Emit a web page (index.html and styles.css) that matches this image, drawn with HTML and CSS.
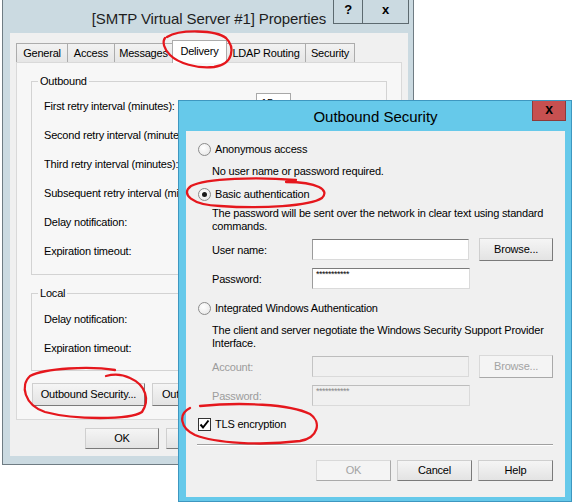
FILE: index.html
```html
<!DOCTYPE html>
<html lang="en">
<head>
    <meta charset="UTF-8">
    <title>SMTP Virtual Server Properties</title>
    <link rel="stylesheet" href="styles.css">
</head>
<body>
<div class="desk">

    <!-- back window: server properties -->
    <div class="win props">
        <div class="titlebar">[SMTP Virtual Server #1] Properties</div>
        <div class="caps">
            <span class="cap cap-help">?</span>
            <span class="cap cap-close">x</span>
        </div>
        <div class="client">
            <div class="tabs">
                <span class="tab t-general">General</span>
                <span class="tab t-access">Access</span>
                <span class="tab t-messages">Messages</span>
                <span class="tab t-delivery selected">Delivery</span>
                <span class="tab t-ldap">LDAP Routing</span>
                <span class="tab t-security">Security</span>
            </div>
            <div class="panel">
                <div class="group outbound">
                    <span class="group-title">Outbound</span>
                    <div class="row"><span class="row-label">First retry interval (minutes):</span><span class="spin">15</span></div>
                    <div class="row"><span class="row-label">Second retry interval (minutes):</span><span class="spin"></span></div>
                    <div class="row"><span class="row-label">Third retry interval (minutes):</span><span class="spin"></span></div>
                    <div class="row"><span class="row-label">Subsequent retry interval (minutes):</span><span class="spin"></span></div>
                    <div class="row"><span class="row-label">Delay notification:</span><span class="spin"></span></div>
                    <div class="row"><span class="row-label">Expiration timeout:</span><span class="spin"></span></div>
                </div>
                <div class="group local">
                    <span class="group-title">Local</span>
                    <div class="row"><span class="row-label">Delay notification:</span><span class="spin"></span></div>
                    <div class="row"><span class="row-label">Expiration timeout:</span><span class="spin"></span></div>
                </div>
                <div class="panel-btns">
                    <span class="btn wide">Outbound Security...</span>
                    <span class="btn wide left">Outbound</span>
                </div>
            </div>
            <div class="footer">
                <span class="btn">OK</span>
                <span class="btn">Cancel</span>
                <span class="btn">Apply</span>
                <span class="btn">Help</span>
            </div>
        </div>
    </div>

    <!-- front window: outbound security -->
    <div class="win sec">
        <div class="titlebar">Outbound Security</div>
        <span class="close-red">x</span>
        <div class="client sec-body">
            <div class="opt"><span class="radio"></span>Anonymous access</div>
            <div class="desc desc-first">No user name or password required.</div>

            <div class="opt opt-gap"><span class="radio on"></span>Basic authentication</div>
            <div class="desc">The password will be sent over the network in clear text using standard<br>commands.</div>
            <div class="field"><span class="field-label">User name:</span><span class="edit"></span><span class="btn browse">Browse...</span></div>
            <div class="field field-next"><span class="field-label">Password:</span><span class="edit"><span class="stars">***********</span></span></div>

            <div class="opt opt-gap-lg"><span class="radio"></span>Integrated Windows Authentication</div>
            <div class="desc desc-first">The client and server negotiate the Windows Security Support Provider<br>Interface.</div>
            <div class="field disabled"><span class="field-label">Account:</span><span class="edit"></span><span class="btn browse">Browse...</span></div>
            <div class="field field-next disabled"><span class="field-label">Password:</span><span class="edit"><span class="stars">***********</span></span></div>

            <div class="opt opt-tls"><span class="check"><svg width="11" height="11" viewBox="0 0 11 11"><path d="M1.5 5.5 L4 8.5 L9.5 1.5" fill="none" stroke="#000" stroke-width="2"/></svg></span>TLS encryption</div>

            <div class="sep"></div>
            <div class="sec-btns">
                <span class="btn off">OK</span>
                <span class="btn">Cancel</span>
                <span class="btn">Help</span>
            </div>
        </div>
    </div>

    <!-- red pen marks on top of the screenshot -->
    <svg class="marks" width="572" height="502" viewBox="0 0 572 502">
        <path d="M167 37 C180 29 216 30 226 38 C235 47 234 64 214 67 C197 69 178 63 170 55 C164 49 162 42 165 38"/>
        <path d="M296 180 C258 177 206 178 191 186 C180 194 192 205 220 206 C262 209 310 206 322 198 C330 190 318 182 286 182"/>
        <path d="M115 370 C90 366 45 368 30 376 C20 385 24 405 45 412 C75 420 130 420 142 412 C150 400 146 385 130 378 C122 374 113 374 106 376"/>
        <path d="M200 406 C240 402 290 404 310 414 C322 422 318 438 300 441 C260 446 215 443 195 435 C180 428 178 414 190 408"/>
    </svg>
</div>
</body>
</html>
```

FILE: styles.css
```css
body {
    margin: 0;
    font-family: "Liberation Sans", Arial, sans-serif;
    font-size: 11px;
    letter-spacing: -0.2px;
    color: #000;
    background: #fff;
}
.desk {
    position: relative;
    width: 572px;
    height: 502px;
    overflow: hidden;
}

/* windows */
.win {
    position: absolute;
    box-sizing: border-box;
    display: flex;
    flex-direction: column;
}
.titlebar {
    flex: none;
    text-align: center;
    font-size: 15px;
    letter-spacing: 0;
    white-space: nowrap;
}
.client {
    flex: 1;
    background: #f0f0f0;
    display: flex;
    flex-direction: column;
    box-sizing: border-box;
}

/* back window */
.props {
    left: 2px;
    top: -1px;
    width: 412px;
    height: 466px;
    background: #cbdae1;
    border: 1px solid #6f7c83;
    padding: 0 5px 8px 7px;
}
.props .titlebar {
    height: 33px;
    line-height: 37px;
    letter-spacing: -0.1px;
    color: #1e1e1e;
}
.caps {
    position: absolute;
    top: 0;
    right: 4px;
    display: flex;
}
.cap {
    box-sizing: border-box;
    height: 24px;
    border: 1px solid #5d6a70;
    border-top: none;
    font-weight: bold;
    font-size: 13px;
    text-align: center;
    line-height: 20px;
}
.cap-help { width: 30px; }
.cap-close { width: 47px; margin-left: -1px; }
.props .client {
    padding: 7px 6px 0 6px;
}

.tabs {
    display: flex;
    align-items: flex-end;
    height: 22px;
    position: relative;
    z-index: 1;
}
.tab {
    box-sizing: border-box;
    height: 19px;
    line-height: 18px;
    text-align: center;
    border: 1px solid #acacac;
    border-bottom: none;
    background: linear-gradient(#f2f2f2, #e6e6e6);
    margin-left: -1px;
    white-space: nowrap;
}
.t-general { width: 52px; margin-left: 0; }
.t-access { width: 48px; }
.t-messages { width: 59px; }
.t-delivery { width: 55px; }
.t-ldap { width: 80px; }
.t-security { width: 50px; }
.tab.selected {
    height: 23px;
    margin-bottom: -1px;
    background: #fff;
    line-height: 20px;
}

.panel {
    flex: none;
    box-sizing: border-box;
    height: 358px;
    border: 1px solid #d9d9d9;
    background: #f7f7f7;
    padding: 18px 14px 0 14px;
}
.group {
    position: relative;
    border: 1px solid #d3d3d3;
    padding: 10px 0 8px 12px;
}
.group-title {
    position: absolute;
    top: -8px;
    left: 6px;
    padding: 0 2px;
    background: #f7f7f7;
    line-height: 15px;
}
.local {
    margin-top: 18px;
    padding: 11px 0 7px 12px;
}
.row {
    height: 29px;
    display: flex;
    align-items: flex-start;
}
.row-label {
    width: 212px;
    line-height: 29px;
    white-space: nowrap;
    overflow: hidden;
}
.spin {
    box-sizing: border-box;
    width: 35px;
    height: 21px;
    margin-top: 1px;
    border: 1px solid #a8a8a8;
    background: #fff;
    padding-left: 4px;
    line-height: 19px;
}
.panel-btns {
    display: flex;
    gap: 7px;
    margin: 12px 0 0 1px;
}

/* buttons */
.btn {
    box-sizing: border-box;
    display: inline-block;
    width: 74px;
    height: 21px;
    line-height: 19px;
    text-align: center;
    border: 1px solid;
    border-color: #cfcfcf #7a7a7a #7a7a7a #cfcfcf;
    background: linear-gradient(#f5f5f5, #e3e3e3);
    white-space: nowrap;
}
.btn.wide {
    width: 113px;
    height: 23px;
    line-height: 21px;
}
.btn.left {
    text-align: left;
    padding-left: 9px;
}
.btn.off,
.disabled .btn {
    color: #a3a3a3;
    border-color: #d9d9d9 #a9a9a9 #a9a9a9 #d9d9d9;
    background: #f4f4f4;
}
.footer {
    display: flex;
    justify-content: flex-end;
    gap: 7px;
    padding-top: 8px;
}

/* front window */
.sec {
    left: 178px;
    top: 100px;
    width: 394px;
    height: 402px;
    background: #66c9ea;
    border: 1px solid #3e97c0;
    padding: 0 6px 4px 7px;
    z-index: 2;
}
.sec .titlebar {
    height: 30px;
    line-height: 31px;
}
.close-red {
    position: absolute;
    top: 0;
    right: 5px;
    box-sizing: border-box;
    width: 34px;
    height: 20px;
    background: #c75050;
    border: 1px solid #8e3a3a;
    border-top: none;
    text-align: center;
    font-weight: bold;
    font-size: 14px;
    line-height: 16px;
}
.sec-body {
    padding: 11px 12px 0 12px;
}
.opt {
    display: flex;
    align-items: center;
    gap: 4px;
    height: 14px;
    white-space: nowrap;
}
.opt-gap { margin-top: 9px; }
.opt-gap-lg { margin-top: 12px; }
.opt-tls { margin-top: 11px; }
.radio {
    box-sizing: border-box;
    width: 13px;
    height: 13px;
    border-radius: 50%;
    border: 1px solid #8c8c8c;
    background: radial-gradient(circle at 40% 35%, #fff, #e4e4e4);
    display: flex;
    align-items: center;
    justify-content: center;
}
.radio.on::after {
    content: "";
    width: 5px;
    height: 5px;
    border-radius: 50%;
    background: #1b1b1b;
}
.check {
    box-sizing: border-box;
    width: 13px;
    height: 13px;
    border: 1px solid #333;
    background: #fff;
    display: flex;
    align-items: center;
    justify-content: center;
}
.desc {
    margin: 6px 0 0 14px;
    line-height: 13px;
    white-space: nowrap;
}
.desc-first { margin-top: 9px; }
.field {
    display: flex;
    align-items: center;
    height: 21px;
    margin: 6px 0 0 14px;
}
.field-next { margin-top: 8px; }
.field-label { width: 100px; }
.edit {
    box-sizing: border-box;
    width: 158px;
    height: 21px;
    border: 1px solid;
    border-color: #7b7b7b #dadada #dadada #9b9b9b;
    background: #fff;
    padding: 1px 0 0 3px;
}
.stars {
    display: block;
    font-size: 9px;
    line-height: 8px;
    letter-spacing: -0.5px;
}
.browse {
    height: 23px;
    line-height: 21px;
    margin-left: 10px;
}
.disabled .field-label { color: #9c9c9c; }
.disabled .edit {
    background: #f0f0f0;
    border-color: #bdbdbd #dadada #dadada #c4c4c4;
}
.disabled .stars { color: #8a8a8a; }
.sep {
    margin: 13px 0 0 -1px;
    border-top: 1px solid #a0a0a0;
    border-bottom: 1px solid #fff;
}
.sec-btns {
    display: flex;
    justify-content: flex-end;
    gap: 6px;
    margin-top: 14px;
}
.sec-btns .btn { width: 75px; }

/* pen marks */
.marks {
    position: absolute;
    left: 0;
    top: 0;
    z-index: 3;
}
.marks path {
    fill: none;
    stroke: #e5171d;
    stroke-width: 2.3;
    stroke-linecap: round;
}
```
